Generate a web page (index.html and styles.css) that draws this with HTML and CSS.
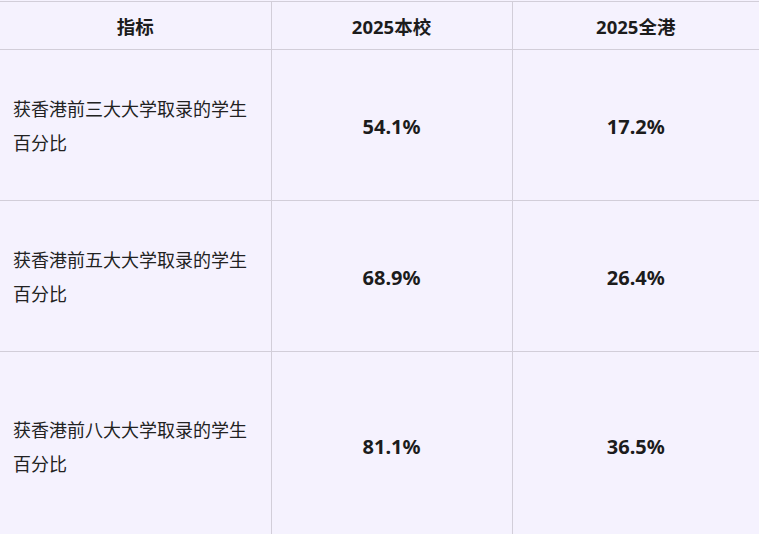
FILE: index.html
```html
<!DOCTYPE html>
<html lang="zh">
<head>
<meta charset="utf-8">
<link rel="stylesheet" href="styles.css">
</head>
<body>
<table class="stats">
  <colgroup>
    <col class="c1"><col class="c2"><col class="c3">
  </colgroup>
  <thead>
    <tr class="head">
      <th>指标</th>
      <th>2025本校</th>
      <th>2025全港</th>
    </tr>
  </thead>
  <tbody>
    <tr class="row">
      <td class="label">获香港前三大大学取录的学生<br>百分比</td>
      <td class="num">54.1%</td>
      <td class="num">17.2%</td>
    </tr>
    <tr class="row">
      <td class="label">获香港前五大大学取录的学生<br>百分比</td>
      <td class="num">68.9%</td>
      <td class="num">26.4%</td>
    </tr>
    <tr class="row last">
      <td class="label">获香港前八大大学取录的学生<br>百分比</td>
      <td class="num">81.1%</td>
      <td class="num">36.5%</td>
    </tr>
  </tbody>
</table>
</body>
</html>
```
FILE: styles.css
```css
html, body {
  margin: 0;
  padding: 0;
  background: #f5f2fe;
}
body {
  padding-top: 1px;
  font-family: "Noto Sans", "Noto Sans CJK SC", sans-serif;
  color: #1c1c1c;
}
.stats {
  width: 759px;
  border-collapse: collapse;
  table-layout: fixed;
  background: #f5f2fe;
}
.c1 { width: 271px; }
.c2 { width: 241px; }
.c3 { width: 247px; }
.stats th, .stats td {
  border: 1px solid #d2ced9;
  vertical-align: middle;
}
.stats tr > :first-child { border-left: none; }
.stats tr > :last-child { border-right: none; }
.head th {
  height: 47px;
  padding: 0;
  font-size: 18.5px;
  font-weight: 700;
  text-align: center;
}
.row td { height: 148px; padding: 0; }
.row.last td { height: 185px; }
.label {
  padding-left: 13px !important;
  font-size: 18px;
  line-height: 34px;
  font-family: "Noto Sans CJK SC", sans-serif;
  color: #222;
}
.num {
  text-align: center;
  font-size: 20px;
  font-weight: 700;
  padding-top: 2px !important;
}
```
